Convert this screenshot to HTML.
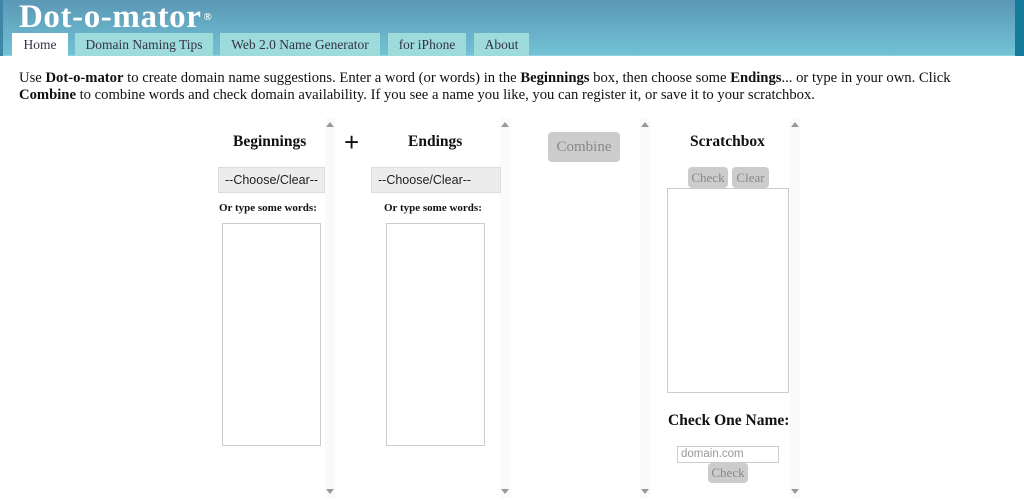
<!DOCTYPE html>
<html><head><meta charset="utf-8"><style>
*{margin:0;padding:0;box-sizing:border-box}
body{width:1024px;height:500px;overflow:hidden;background:#fff;font-family:"Liberation Serif","DejaVu Serif",serif;color:#111;position:relative}
.hdr{position:absolute;left:0;top:0;width:1024px;height:56px;background:linear-gradient(#5b97b5,#72c2d5);border-bottom:1px solid #8fd0dd}
.hdr .edge{position:absolute;right:0;top:0;width:9px;height:56px;background:#137a99}
.hdr .ledge{position:absolute;left:0;top:0;width:3px;height:56px;background:#3f86a6}
.logo{position:absolute;left:19px;top:1px;color:#fff;font-size:33px;line-height:33px;font-weight:bold;letter-spacing:0.6px;white-space:nowrap}
.logo sup{font-size:11px;vertical-align:top;position:relative;top:0px;margin-left:2px}
.tab{position:absolute;top:33px;height:23px;background:#9edcdc;color:#334;font-size:13.5px;text-align:center;line-height:24px}
.tab.on{background:#fff}
.intro{position:absolute;left:19px;top:70px;width:990px;font-size:14.65px;line-height:17px}
.sb{position:absolute;top:118px;width:10px;height:380px;background:#fafafa}
.sb:before{content:"";position:absolute;left:1px;top:4px;border:4px solid transparent;border-bottom:5px solid #999;border-top:0}
.sb:after{content:"";position:absolute;left:1px;bottom:4px;border:4px solid transparent;border-top:5px solid #999;border-bottom:0}
.h{position:absolute;font-weight:bold;font-size:15.5px}
.sel{position:absolute;height:26px;background:#ececec;border:1px solid #ddd;font-family:"Liberation Sans",sans-serif;font-size:12.5px;line-height:24px;padding-left:6px;color:#222}
.small{position:absolute;font-size:11px;font-weight:bold}
.ta{position:absolute;border:1px solid #ccc;background:#fff}
.btn{position:absolute;background:#ccc;color:#888;border-radius:4px;text-align:center}
</style></head><body>
<div class="hdr"><div class="edge"></div><div class="ledge"></div>
<div class="logo">Dot-o-mator<sup>®</sup></div>
<div class="tab on" style="left:12px;width:56px">Home</div>
<div class="tab" style="left:75px;width:138px">Domain Naming Tips</div>
<div class="tab" style="left:220px;width:160px">Web 2.0 Name Generator</div>
<div class="tab" style="left:388px;width:78px">for iPhone</div>
<div class="tab" style="left:474px;width:55px">About</div>
</div>
<div class="intro">Use <b>Dot-o-mator</b> to create domain name suggestions. Enter a word (or words) in the <b>Beginnings</b> box, then choose some <b>Endings</b>... or type in your own. Click <b>Combine</b> to combine words and check domain availability. If you see a name you like, you can register it, or save it to your scratchbox.</div>
<div class="sb" style="left:325px"></div>
<div class="sb" style="left:500px"></div>
<div class="sb" style="left:640px"></div>
<div class="sb" style="left:790px"></div>
<div class="h" style="left:233px;top:133px">Beginnings</div>
<div style="position:absolute;left:344px;top:127px;font-size:26px;font-family:'Liberation Sans',sans-serif">+</div>
<div class="h" style="left:408px;top:133px">Endings</div>
<div class="btn" style="left:548px;top:132px;width:72px;height:30px;line-height:30px;font-size:15px">Combine</div>
<div class="h" style="left:690px;top:133px">Scratchbox</div>
<div class="sel" style="left:218px;top:167px;width:107px">--Choose/Clear--</div>
<div class="sel" style="left:371px;top:167px;width:130px">--Choose/Clear--</div>
<div class="btn" style="left:688px;top:167px;width:40px;height:21px;line-height:21px;font-size:13px">Check</div>
<div class="btn" style="left:732px;top:167px;width:37px;height:21px;line-height:21px;font-size:13px">Clear</div>
<div class="small" style="left:219px;top:202px">Or type some words:</div>
<div class="small" style="left:384px;top:202px">Or type some words:</div>
<div class="ta" style="left:222px;top:223px;width:99px;height:223px"></div>
<div class="ta" style="left:386px;top:223px;width:99px;height:223px"></div>
<div class="ta" style="left:667px;top:188px;width:122px;height:205px"></div>
<div class="h" style="left:668px;top:412px">Check One Name:</div>
<div class="ta" style="left:677px;top:446px;width:102px;height:17px;font-family:'Liberation Sans',sans-serif;font-size:11.5px;color:#999;padding-left:3px;line-height:15px">domain.com</div>
<div class="btn" style="left:708px;top:463px;width:40px;height:20px;line-height:20px;font-size:13px">Check</div>
</body></html>
